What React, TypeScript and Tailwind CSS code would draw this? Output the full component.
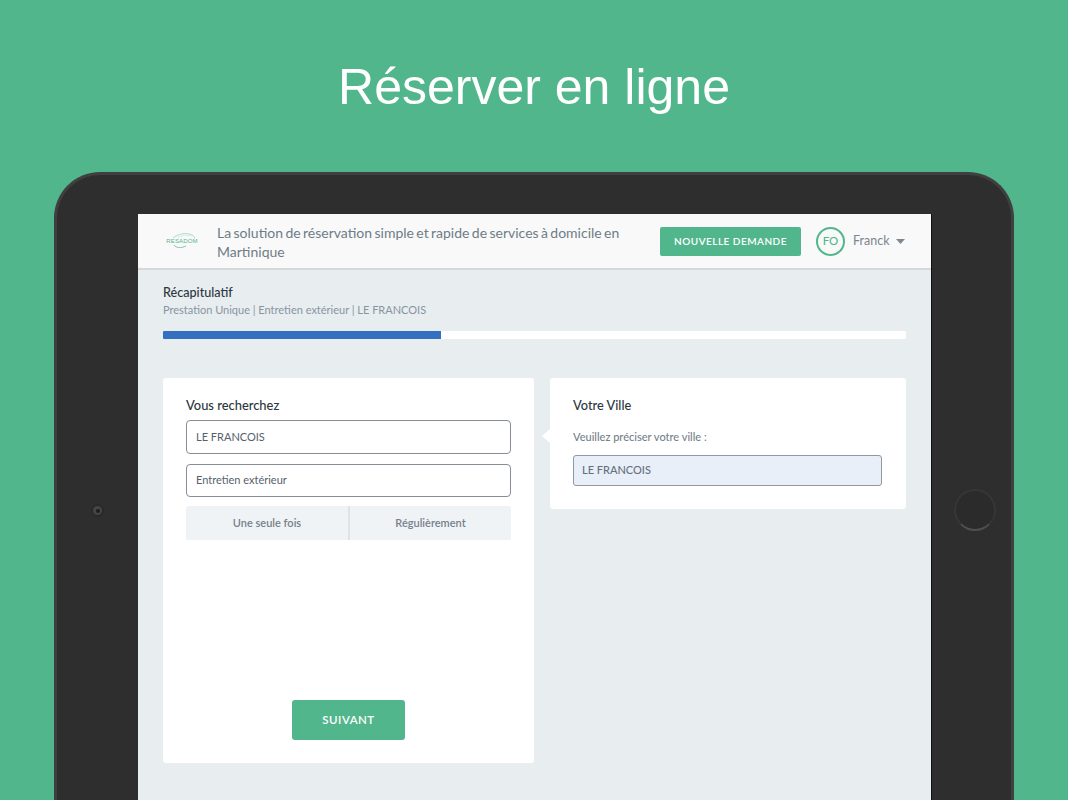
import React from "react";

const lato = "[font-family:Lato,'Noto_Sans',sans-serif]";

function Logo() {
  return (
    <div className="relative w-[34px] h-[20px] shrink-0 flex items-center justify-center">
      <svg className="absolute inset-0" width="34" height="20" viewBox="0 0 34 20" fill="none">
        <path d="M8 7 C13 3, 21 1, 27 4 C29 5, 29.5 6, 29.5 7.5" stroke="#8ccdb3" strokeWidth="0.7" />
        <path d="M13 6.5 C17 4.5, 22 3.5, 26 5" stroke="#b9e0d0" strokeWidth="0.6" />
        <path d="M9 14 C11 17, 16 17.5, 21 15" stroke="#52b68c" strokeWidth="0.7" />
      </svg>
      <span className="relative text-[6px] leading-none font-medium text-[#52b68c] [font-family:'Liberation_Sans',sans-serif] tracking-[0.15px]">RESADOM</span>
    </div>
  );
}

export default function App() {
  return (
    <div className={`w-[1068px] h-[800px] overflow-hidden bg-[#52b68c] flex flex-col items-center ${lato}`}>
      <h1 className="mt-[57px] h-[60px] text-[50px] leading-[60px] text-white font-normal [font-family:'Liberation_Sans',Arial,sans-serif]">
        Réserver en ligne
      </h1>
      <div className="mt-[55px] w-[960px] h-[700px] shrink-0 rounded-t-[46px] border-[3px] border-b-0 border-[#3f3f3f] bg-[#2e2e2e] pt-[39px] pl-[81px] flex items-start">
        <div className="relative w-0 h-0">
          <div className="absolute left-[-47px] top-[290px] w-[13px] h-[13px] rounded-full bg-[#2a2a2a] flex items-center justify-center">
            <div className="w-[9px] h-[9px] rounded-full bg-[#454545] flex items-center justify-center">
              <div className="w-[4px] h-[4px] rounded-full bg-[#1e1e1e]" />
            </div>
          </div>
          <div className="absolute left-[816px] top-[275px] w-[42px] h-[42px] rounded-full bg-[#2b2b2b] border-2 border-[#363636] border-b-[#4f4f4f]" />
        </div>
        <div className="w-[794px] h-[590px] shrink-0 bg-[#e8edf0] border-r border-[#111111] flex flex-col">
          <header className="h-[56px] shrink-0 bg-[#f9f9f9] border-b-2 border-[#d5d8da] flex items-center pl-[27px]">
            <Logo />
            <p className="ml-[18px] mt-[1px] w-[426px] shrink-0 text-[14px] leading-[19px] [word-spacing:-1.2px] text-[#6f7c87]">
              La solution de réservation simple et rapide de services à domicile en Martinique
            </p>
            <button className="ml-[17px] w-[141px] h-[29px] shrink-0 rounded-[2px] bg-[#52b68c] text-white text-[10px] font-semibold tracking-[0.5px]">
              NOUVELLE DEMANDE
            </button>
            <div className="ml-[15px] w-[29px] h-[29px] shrink-0 rounded-full border-2 border-[#52b68c] flex items-center justify-center text-[11.5px] font-medium text-[#52b68c]">
              FO
            </div>
            <span className="ml-[8px] mt-[1px] w-[36px] shrink-0 text-[12.5px] text-[#7b8791]">Franck</span>
            <svg className="ml-[7px] mt-[1px] shrink-0" width="9" height="5" viewBox="0 0 9 5">
              <path d="M0 0 H9 L4.5 5 Z" fill="#7b8791" />
            </svg>
          </header>

          <div className="pl-[25px] pr-[25px] pt-[15px] flex-1 flex flex-col">
            <h2 className="text-[12.6px] leading-[16px] text-[#2c3640] font-medium">Récapitulatif</h2>
            <p className="mt-[1px] text-[11px] leading-[16px] text-[#8795a1]">
              Prestation Unique | Entretien extérieur | LE FRANCOIS
            </p>
            <div className="mt-[13px] h-[8px] bg-white rounded-[1px]">
              <div className="h-full w-[278px] bg-[#3470bf] rounded-l-[1px]" />
            </div>

            <div className="mt-[39px] flex items-start gap-[16px]">
              <section className="w-[371px] h-[385px] shrink-0 bg-white rounded-[3px] px-[23px] pt-[19px] flex flex-col">
                <h3 className="text-[12.9px] leading-[16px] text-[#2c3640] font-medium">Vous recherchez</h3>
                <div className="mt-[7px] h-[34px] rounded-[4px] border border-[#868e96] px-[9px] flex items-center text-[11px] text-[#56616b]">
                  LE FRANCOIS
                </div>
                <div className="mt-[10px] h-[33px] rounded-[4px] border border-[#868e96] px-[9px] flex items-center text-[11px] text-[#56616b]">
                  Entretien extérieur
                </div>
                <div className="mt-[9px] h-[34px] rounded-[2px] bg-[#f0f3f6] flex text-[11px] font-semibold text-[#75818c]">
                  <div className="w-[162px] flex items-center justify-center">Une seule fois</div>
                  <div className="w-[2px] bg-[#dfe3e6]" />
                  <div className="flex-1 flex items-center justify-center">Régulièrement</div>
                </div>
                <button className="mt-[160px] mx-auto w-[113px] h-[40px] rounded-[3px] bg-[#52b68c] text-white text-[11.5px] font-semibold tracking-[0.5px]">
                  SUIVANT
                </button>
              </section>

              <section className="relative flex-1 h-[131px] bg-white rounded-[3px] pl-[23px] pr-[24px] pt-[19px]">
                <div className="absolute left-[-8px] top-[51px] w-0 h-0 border-y-[7px] border-y-transparent border-r-[8px] border-r-white" />
                <h3 className="text-[12.8px] leading-[16px] text-[#2c3640] font-medium">Votre Ville</h3>
                <p className="mt-[16px] text-[11px] leading-[16px] font-medium text-[#75818c]">Veuillez préciser votre ville :</p>
                <div className="mt-[10px] h-[31px] rounded-[3px] border border-[#8f98a3] bg-[#e8eff8] px-[8px] flex items-center text-[11px] font-medium text-[#65717d]">
                  LE FRANCOIS
                </div>
              </section>
            </div>
          </div>
        </div>
      </div>
    </div>
  );
}
